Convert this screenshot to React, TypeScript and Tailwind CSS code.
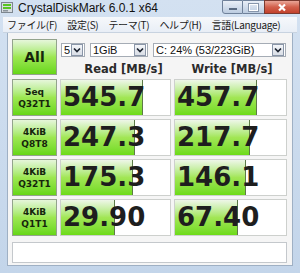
import React from 'react';

type Row = {
  top: string;
  bottom: string;
  read: string;
  readFill: number;
  write: string;
  writeFill: number;
};

const rows: Row[] = [
  { top: 'Seq', bottom: 'Q32T1', read: '545.7', readFill: 82, write: '457.7', writeFill: 82 },
  { top: '4KiB', bottom: 'Q8T8', read: '247.3', readFill: 74, write: '217.7', writeFill: 75 },
  { top: '4KiB', bottom: 'Q32T1', read: '175.3', readFill: 72, write: '146.1', writeFill: 71 },
  { top: '4KiB', bottom: 'Q1T1', read: '29.90', readFill: 54, write: '67.40', writeFill: 63 },
];

const menus = ['ファイル(F)', '設定(S)', 'テーマ(T)', 'ヘルプ(H)', '言語(Language)'];

function Chevron() {
  return (
    <div className="w-[12px] h-[12px] border border-[#8a96a8] bg-gradient-to-b from-[#f4f6f9] to-[#d9dee6] flex items-center justify-center">
      <svg width="10" height="10" viewBox="0 0 10 10">
        <path d="M2 3.5 L5 6.5 L8 3.5" fill="none" stroke="#1c2430" strokeWidth="1.7" />
      </svg>
    </div>
  );
}

function Combo({ text, width }: { text: string; width: string }) {
  return (
    <div className={`${width} h-[14px] bg-white border border-[#a5acb5] flex items-center justify-between pl-[2px] pr-px`}>
      <span className="text-[11px] leading-none text-[#111]">{text}</span>
      <Chevron />
    </div>
  );
}

function Cell({ value, fill }: { value: string; fill: number }) {
  return (
    <div className="relative h-[37px] bg-white border border-[#cdd0cd] overflow-hidden">
      <div
        className="absolute left-0 top-0 bottom-0 bg-gradient-to-b from-[#eef6e8] via-[#a2e655] to-[#6ddb16] border-r border-[#5d7a48]"
        style={{ width: fill }}
      />
      <div className="relative pl-[2px] font-['DejaVu_Sans',sans-serif] font-bold text-[26px] leading-[35px] text-[#1e1e1e]">
        {value}
      </div>
    </div>
  );
}

function GreenButton({ children, className }: { children: React.ReactNode; className: string }) {
  return (
    <div
      className={`${className} border border-[#93a38c] bg-gradient-to-b from-[#e6f6da] via-[#9de751] to-[#66d714] flex flex-col items-center justify-center font-['DejaVu_Sans',sans-serif] font-bold text-[#16260c]`}
    >
      {children}
    </div>
  );
}

export default function App() {
  return (
    <div className="w-[300px] h-[273px] bg-gradient-to-b from-[#d3e1f1] to-[#c3d5ea] flex flex-col font-['Liberation_Sans','Noto_Sans_CJK_JP',sans-serif] overflow-hidden">
      {/* title bar */}
      <div className="h-[17px] flex items-start shrink-0">
        <div className="mt-[2px] ml-[1px] w-[12px] h-[11px]">
          <svg width="12" height="11" viewBox="0 0 12 11">
            <rect x="0.5" y="0.5" width="11" height="10" fill="#d8dde2" stroke="#7d8790" />
            <rect x="2" y="2" width="8" height="2" fill="#58c422" />
            <rect x="2" y="5" width="8" height="2" fill="#58c422" />
            <rect x="2" y="8" width="5" height="1.5" fill="#8a949c" />
          </svg>
        </div>
        <div className="ml-[5px] mt-[1px] text-[12px] leading-[15px] text-[#111]">CrystalDiskMark 6.0.1 x64</div>
        <div className="ml-auto flex">
          <div className="w-[21px] h-[14px] border border-[#6f819a] rounded-bl-[3px] bg-gradient-to-b from-[#e9eff7] to-[#bccce0] flex items-end justify-center pb-[3px]">
            <div className="w-[8px] h-[2px] bg-white border border-[#5a6b82]" />
          </div>
          <div className="w-[21px] h-[14px] border-y border-[#6f819a] bg-gradient-to-b from-[#e9eff7] to-[#bccce0] flex items-center justify-center">
            <div className="w-[9px] h-[7px] border border-white outline outline-1 outline-[#8796ab]" />
          </div>
          <div className="w-[36px] h-[14px] border border-[#7a3a30] bg-gradient-to-b from-[#e9a597] via-[#d2604c] to-[#c2412c] flex items-center justify-center">
            <svg width="10" height="9" viewBox="0 0 10 9">
              <path d="M2 1.5 L8 7.5 M8 1.5 L2 7.5" stroke="#fff" strokeWidth="2.2" />
            </svg>
          </div>
        </div>
      </div>

      {/* menu bar */}
      <div className="h-[16px] mx-[3px] bg-gradient-to-b from-[#f6f8fb] to-[#e8eef6] border-b border-[#c8d3e0] flex items-center shrink-0 font-['Noto_Sans_CJK_JP',sans-serif] text-[10px] leading-none text-[#1a1a1a] tracking-[-0.3px]">
        {menus.map((m, i) => (
          <span key={m} className={i === 0 ? 'ml-[4px]' : 'ml-[10px]'}>
            {m}
          </span>
        ))}
      </div>

      {/* body */}
      <div className="flex-1 mx-[7px] mb-[7px] bg-[#f5f5f5] border-x border-b border-[#9fb0c4] pl-[4px] pt-[6px] flex flex-col">
        <div className="flex h-[40px]">
          <GreenButton className="w-[45px] h-[36px] text-[14px]">All</GreenButton>
          <div className="ml-[4px] flex flex-col">
            <div className="flex items-center mt-[4px] gap-[5px]">
              <Combo text="5" width="w-[24px]" />
              <Combo text="1GiB" width="w-[58px]" />
              <Combo text="C: 24% (53/223GiB)" width="w-[133px]" />
            </div>
            <div className="flex mt-[4px] font-['DejaVu_Sans',sans-serif] font-bold text-[11.5px] leading-[16px] text-[#2b2b2b]">
              <div className="w-[111px] pl-[14px] text-center">Read [MB/s]</div>
              <div className="w-[116px] pl-[4px] text-center">Write [MB/s]</div>
            </div>
          </div>
        </div>

        <div className="grid grid-cols-[45px_111px_113px] gap-x-[3px] gap-y-[3px]">
          {rows.map((r, i) => (
            <React.Fragment key={i}>
              <GreenButton className="h-[37px] text-[9px] leading-[12px]">
                <span>{r.top}</span>
                <span>{r.bottom}</span>
              </GreenButton>
              <Cell value={r.read} fill={r.readFill} />
              <Cell value={r.write} fill={r.writeFill} />
            </React.Fragment>
          ))}
        </div>

        <div className="mt-[6px] w-[275px] h-[21px] bg-white border border-[#c4c8cc]" />
      </div>
    </div>
  );
}
